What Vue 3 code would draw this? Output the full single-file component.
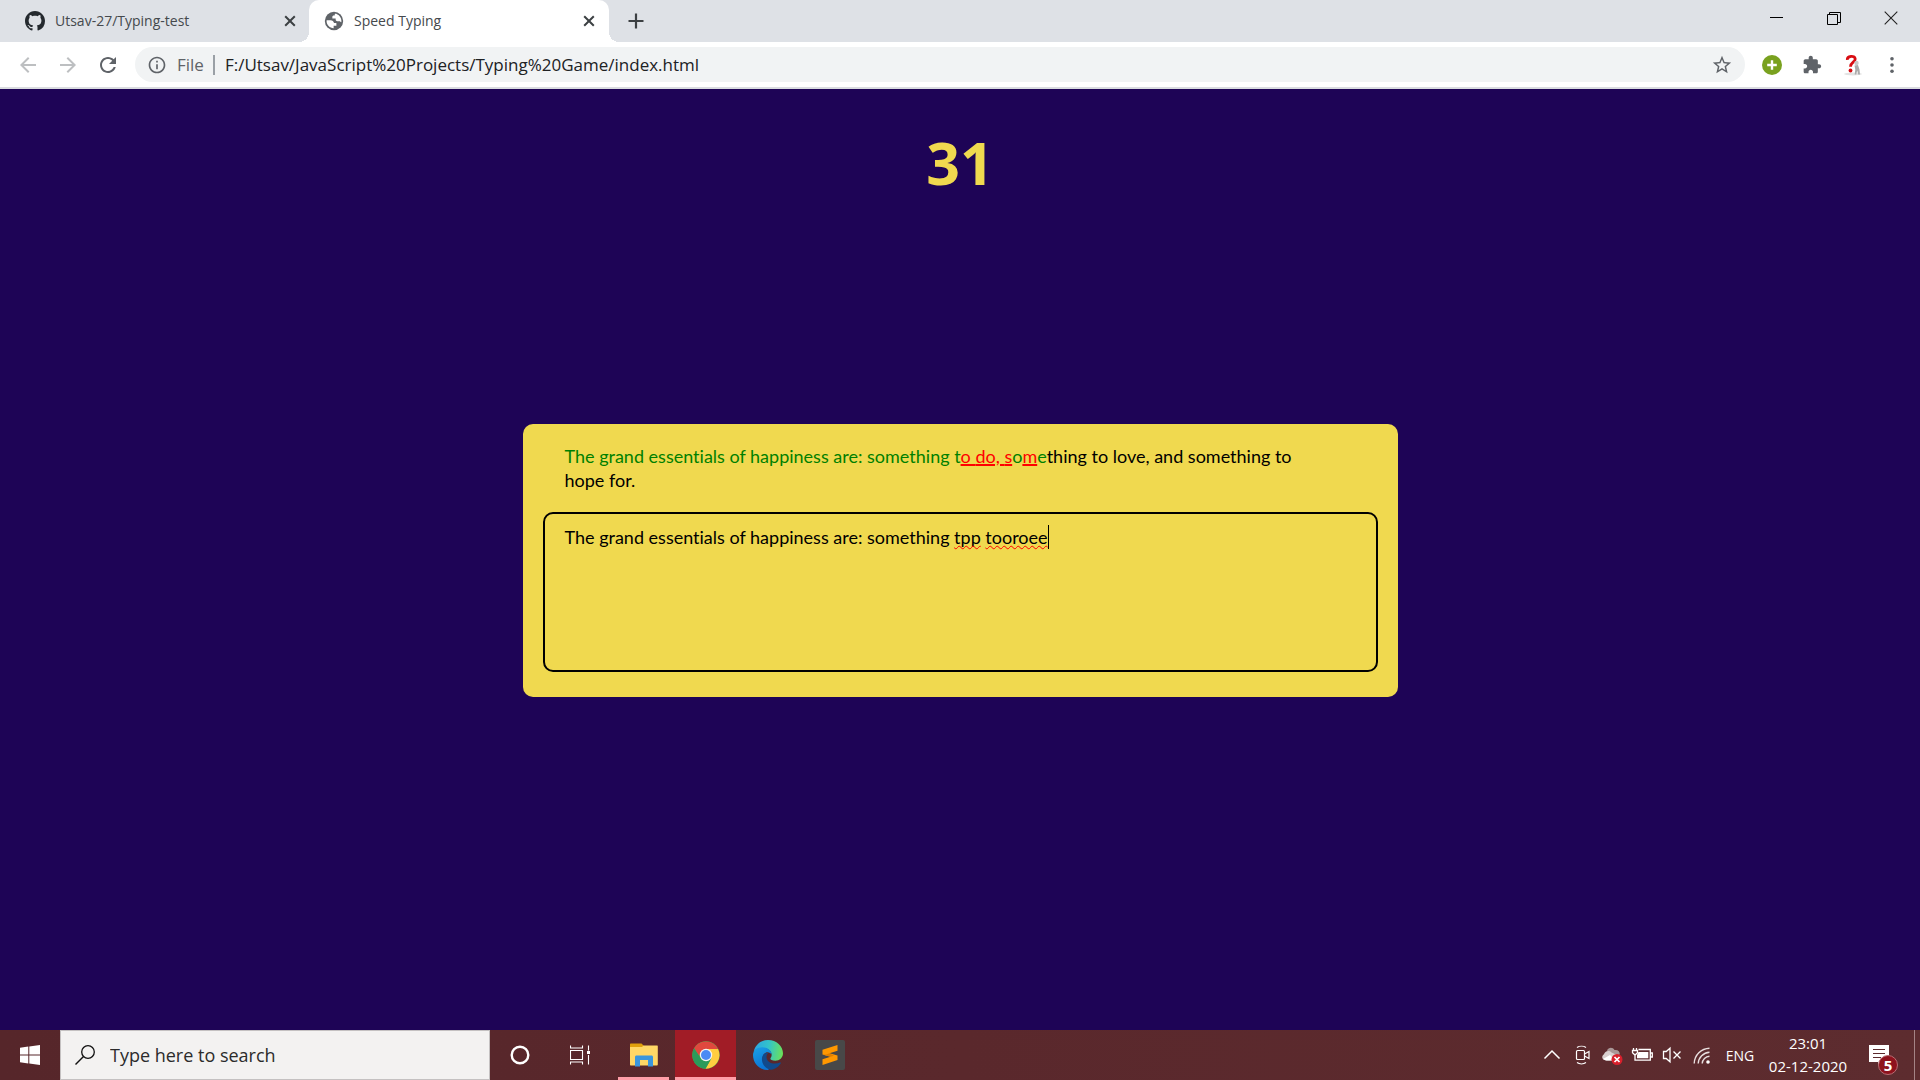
<script setup>
import { ref, computed } from 'vue'

const quote = 'The grand essentials of happiness are: something to do, something to love, and something to hope for.'
const typed = ref('The grand essentials of happiness are: something tpp tooroee')
const timer = ref(31)
const address = ref('F:/Utsav/JavaScript%20Projects/Typing%20Game/index.html')
const misspelled = ['tpp', 'tooroee']

// Characters of one word that share a state are drawn in one span.
const runs = computed(() => {
  const out = []
  quote.split('').forEach((ch, i) => {
    const t = typed.value[i]
    const state = t === undefined ? 'pending' : t === ch ? 'correct' : 'incorrect'
    const last = out[out.length - 1]
    if (last && last.state === state && !last.text.endsWith(' ')) last.text += ch
    else out.push({ state, text: ch })
  })
  return out
})

const typedWords = computed(() => typed.value.split(/( )/))
</script>

<template>
  <div class="desktop">
    <header class="browser">
      <div class="tabs">
        <div class="tab tab-first">
          <svg class="octocat" viewBox="0 0 16 16"><path fill="#24292e" d="M8 0C3.58 0 0 3.58 0 8c0 3.54 2.29 6.53 5.47 7.59.4.07.55-.17.55-.38 0-.19-.01-.82-.01-1.49-2.01.37-2.53-.49-2.69-.94-.09-.23-.48-.94-.82-1.13-.28-.15-.68-.52-.01-.53.63-.01 1.08.58 1.23.82.72 1.21 1.87.87 2.33.66.07-.52.28-.87.51-1.07-1.78-.2-3.64-.89-3.64-3.95 0-.87.31-1.59.82-2.15-.08-.2-.36-1.02.08-2.12 0 0 .67-.21 2.2.82.64-.18 1.32-.27 2-.27s1.36.09 2 .27c1.53-1.04 2.2-.82 2.2-.82.44 1.1.16 1.92.08 2.12.51.56.82 1.27.82 2.15 0 3.07-1.87 3.75-3.65 3.95.29.25.54.73.54 1.48 0 1.07-.01 1.93-.01 2.2 0 .21.15.46.55.38A8.01 8.01 0 0 0 16 8c0-4.42-3.58-8-8-8z"/></svg>
          <span class="tab-title">Utsav-27/Typing-test</span>
          <button class="plain" aria-label="Close tab"><svg class="i20" viewBox="0 0 20 20"><path d="M5.2 5.2l9.6 9.6M14.8 5.2l-9.6 9.6" stroke="#3c4043" stroke-width="2"/></svg></button>
        </div>
        <div class="tab tab-active">
          <svg class="i22" viewBox="0 0 24 24"><circle cx="12" cy="12" r="10" fill="#5f6368"/><path fill="#fff" d="M13 4.2c.8-.1 1.6.1 2.3.4 2.8 1.2 4.8 4 4.8 7.3 0 .6-.1 1-.2 1.5-.6-.2-1-.7-1.3-1.2h-2.9c-1 0-1.9-.8-1.9-1.9v-1h-3.6V7.5c0-.9.6-1.5 1.5-1.5h1z"/><path fill="#fff" d="M4 11.2h4.3c2 0 3.5 1.3 3.7 3h2.6v3h-3v2.7c-4.2 0-7.7-3.6-7.7-7.8z"/></svg>
          <span class="tab-title">Speed Typing</span>
          <button class="plain" aria-label="Close tab"><svg class="i20" viewBox="0 0 20 20"><path d="M5.2 5.2l9.6 9.6M14.8 5.2l-9.6 9.6" stroke="#3c4043" stroke-width="2"/></svg></button>
        </div>
        <button class="plain new-tab" aria-label="New tab"><svg class="i20" viewBox="0 0 20 20"><path d="M10 2.5v15M2.5 10h15" stroke="#3c4043" stroke-width="2.2"/></svg></button>
        <div class="window-controls">
          <button class="plain" aria-label="Minimize"><svg class="i14" viewBox="0 0 14 14"><path d="M0 6.5h13" stroke="#000"/></svg></button>
          <button class="plain" aria-label="Restore"><svg class="i14" viewBox="0 0 14 14"><path d="M.5 3.5h10v10H.5zM2.5 3.5v-2h11v10h-3" fill="none" stroke="#000"/></svg></button>
          <button class="plain" aria-label="Close"><svg class="i14" viewBox="0 0 14 14"><path d="M.7.7l12.6 12.6M13.3.7L.7 13.3" stroke="#222" stroke-width="1.1"/></svg></button>
        </div>
      </div>

      <div class="toolbar">
        <button class="plain tool" aria-label="Back"><svg class="i24" viewBox="0 0 24 24"><path fill="#bdbfc1" d="M20 11H7.83l5.59-5.59L12 4l-8 8 8 8 1.41-1.41L7.83 13H20v-2z"/></svg></button>
        <button class="plain tool" aria-label="Forward"><svg class="i24" viewBox="0 0 24 24"><path fill="#bdbfc1" d="M12 4l-1.41 1.41L16.17 11H4v2h12.17l-5.58 5.59L12 20l8-8z"/></svg></button>
        <button class="plain tool" aria-label="Reload"><svg class="i24" viewBox="0 0 24 24"><path fill="#5f6368" d="M17.65 6.35C16.2 4.9 14.21 4 12 4c-4.42 0-7.99 3.58-7.99 8s3.57 8 7.99 8c3.73 0 6.84-2.55 7.73-6h-2.08c-.82 2.33-3.04 4-5.65 4-3.31 0-6-2.69-6-6s2.69-6 6-6c1.66 0 3.14.69 4.22 1.78L13 11h7V4l-2.35 2.35z"/></svg></button>
        <div class="omnibox">
          <svg class="i20" viewBox="0 0 24 24"><path fill="#5f6368" d="M11 17h2v-6h-2v6zm1-15C6.48 2 2 6.48 2 12s4.48 10 10 10 10-4.48 10-10S17.52 2 12 2zm0 18c-4.41 0-8-3.59-8-8s3.59-8 8-8 8 3.59 8 8-3.59 8-8 8zM11 9h2V7h-2v2z"/></svg>
          <label class="scheme" for="address">File</label>
          <span class="divider"></span>
          <input id="address" v-model="address" class="address" type="text" spellcheck="false" />
          <button class="plain tool" aria-label="Bookmark this page"><svg class="i22" viewBox="0 0 24 24"><path fill="#5f6368" d="M22 9.24l-7.19-.62L12 2 9.19 8.63 2 9.24l5.46 4.73L5.82 21 12 17.27 18.18 21l-1.63-7.03L22 9.24zM12 15.4l-3.76 2.27 1-4.28-3.32-2.88 4.38-.38L12 6.1l1.71 4.04 4.38.38-3.32 2.88 1 4.28L12 15.4z"/></svg></button>
        </div>
        <button class="plain tool" aria-label="Add"><svg class="i20" viewBox="0 0 20 20"><circle cx="10" cy="10" r="10" fill="#79a11f"/><path d="M10 5.2v9.6M5.2 10h9.6" stroke="#fff" stroke-width="2.4"/></svg></button>
        <button class="plain tool" aria-label="Extensions"><svg class="i20" viewBox="0 0 24 24"><path fill="#5f6368" d="M20.5 11H19V7c0-1.1-.9-2-2-2h-4V3.5C13 2.12 11.88 1 10.5 1S8 2.12 8 3.5V5H4c-1.1 0-1.99.9-1.99 2v3.8H3.5c1.49 0 2.7 1.21 2.7 2.7s-1.21 2.7-2.7 2.7H2V20c0 1.1.9 2 2 2h3.8v-1.5c0-1.49 1.21-2.7 2.7-2.7 1.49 0 2.7 1.21 2.7 2.7V22H17c1.1 0 2-.9 2-2v-4h1.5c1.38 0 2.5-1.12 2.5-2.5S21.88 11 20.5 11z"/></svg></button>
        <button class="plain tool" aria-label="Help extension"><svg class="i22" viewBox="0 0 22 22"><ellipse cx="12" cy="20" rx="9" ry="1.5" fill="#e2e2e2"/><path d="M6.3 5.8C6 2 13.8.8 14.200 5c.1 3.300-4.700 3.200-4.700 7.800" fill="none" stroke="#d80d12" stroke-width="2.8"/><circle cx="9.500" cy="16.500" r="1.900" fill="#d80d12"/><circle cx="15.500" cy="9" r="2.200" fill="#c9c9c9"/><path d="M13.500 11.500l3.500-.5 1.500 4.500.5 5h-1.800l-1-4-1 4h-1.500l.6-5z" fill="#ababab"/></svg></button>
        <button class="plain tool" aria-label="Menu"><svg class="i20" viewBox="0 0 20 20"><g fill="#5f6368"><circle cx="10" cy="3.7" r="1.8"/><circle cx="10" cy="10" r="1.8"/><circle cx="10" cy="16.3" r="1.8"/></g></svg></button>
      </div>
    </header>

    <main class="page">
      <div class="timer">{{ timer }}</div>
      <section class="card">
        <p class="quote"><span v-for="(run, i) in runs" :key="i" :class="run.state">{{ run.text }}</span></p>
        <div class="entry">
          <textarea v-model="typed" class="field" aria-label="Type the quote" spellcheck="false"></textarea>
          <div class="marks" aria-hidden="true"><span v-for="(word, i) in typedWords" :key="i" :class="{ misspelled: misspelled.includes(word) }">{{ word }}</span><span class="caret"></span></div>
        </div>
      </section>
    </main>

    <footer class="taskbar">
      <button class="plain slot" aria-label="Start"><svg class="i20" viewBox="0 0 20 20"><path fill="#fff" d="M0 2.7L8.3 1.5V9.4H0zM9.3 1.4L20 0V9.4H9.3zM0 10.4h8.3v8L0 17.2zM9.3 10.4H20V20L9.3 18.5z"/></svg></button>
      <div class="search">
        <svg class="i20" viewBox="0 0 20 20"><circle cx="13" cy="7" r="6.3" fill="none" stroke="#111" stroke-width="1.3"/><path d="M8.5 11.5L.5 19.5" stroke="#111" stroke-width="1.4"/></svg>
        <input class="search-input" type="text" aria-label="Search" placeholder="Type here to search" />
      </div>
      <button class="plain slot" aria-label="Cortana"><svg class="i20" viewBox="0 0 20 20"><circle cx="10" cy="10" r="8.3" fill="none" stroke="#fff" stroke-width="2.4"/></svg></button>
      <button class="plain slot" aria-label="Task view"><svg class="i20" viewBox="0 0 20 20"><g fill="none" stroke="#fff" stroke-width="1.1"><path d="M.5 5.5h12v9H.5zM.5.5v2.5h12V.5M.5 19.5V17h12v2.5M18.5.5v5M18.5 10v9.5"/></g><path fill="#fff" d="M17 6h3v3h-3z"/></svg></button>
      <div class="apps">
        <button class="plain app running" aria-label="File Explorer"><svg class="i30" viewBox="0 0 30 30"><path fill="#e0a00c" d="M1 4.5c0-.6.4-1 1-1h10.5l2 2V8H1z"/><path fill="#ffd766" d="M1 7h12l1.5-1.5H28c.6 0 .8.4.8.8v18.2c0 .6-.3 1-.8 1H2c-.6 0-1-.4-1-1z"/><path fill="#3a96dd" d="M6 26.5V17c0-.8.6-1.5 1.5-1.5h15c.9 0 1.5.7 1.5 1.5v9.5h-5V20h-8v6.5z"/></svg></button>
        <button class="plain app current" aria-label="Chrome"><svg class="i30" viewBox="0 0 30 30"><circle cx="15" cy="15" r="13.7" fill="#4caf50"/><path fill="#e0483e" d="M3.1 8.2A13.7 13.7 0 0 1 27 8.9H15l-5.5 3.7L8 16z"/><path fill="#ffcd40" d="M15 8.9h12A13.7 13.7 0 0 1 14.5 28.7l5.8-10.2z"/><path fill="#2b9a5a" d="M3.1 8.2A13.7 13.7 0 0 0 14.5 28.7L20 19l-10.5-1z"/><circle cx="15" cy="15" r="6.2" fill="#f4f4f4"/><circle cx="15" cy="15" r="5" fill="#4a8af4"/></svg></button>
        <button class="plain app" aria-label="Edge"><svg class="i30" viewBox="0 0 30 30">
          <defs>
            <linearGradient id="edge-top" x1="0" y1=".4" x2="1" y2=".5"><stop offset="0" stop-color="#2ba5e4"/><stop offset=".5" stop-color="#33c3c9"/><stop offset="1" stop-color="#6be159"/></linearGradient>
            <linearGradient id="edge-left" x1="0" y1="0" x2=".4" y2="1"><stop offset="0" stop-color="#1ba0e6"/><stop offset="1" stop-color="#0a74d4"/></linearGradient>
          </defs>
          <path fill="url(#edge-top)" d="M.6 12C2 5 7.8 0 15 0c8.6 0 15 6.2 15 13.3 0 4.6-3.5 7.4-7.6 7.4-3.3 0-5-1.2-5-2 0-.9 1.3-1.5 1.3-3.9C18.7 10.5 14 8 10 8 5 8 1.8 10 .6 12z"/>
          <path fill="url(#edge-left)" d="M0 15c.1-5 4.5-7.7 9.3-7.7 5.3 0 9.4 3.4 9.4 7.5-1.3-2.6-5.3-3.7-7.7-.8-2.5 3.1-1.3 9 3.4 11.7 1.8 1.1 1.5 3.3 1 4.3C6.5 30.3 0 23.6 0 15z"/>
          <path fill="#114a8b" d="M10.8 14.3c-4 4-1.6 13.8 7.2 15.4 4.4-.5 8-3.2 9.8-6.5.3-.7-.2-1-.8-.7-6.2 2.9-13.7-.2-13.5-5.8.1-1.4.6-2.7 1.7-3.7-1.6-.3-3.1.1-4.4 1.3z"/>
        </svg></button>
        <button class="plain app" aria-label="Sublime Text"><svg class="i30" viewBox="0 0 30 30"><rect width="30" height="30" rx="2" fill="#484848"/><path fill="#ff9800" d="M22.5 5v5.8l-8 2.5 8 2.3V20L7.5 25v-5.800l8-2.400-8-2.300V9.800z"/><path fill="#e07f00" d="M7.5 14.5l8 2.3 3.5-1-4.500-2.500-3.500 1.200z"/></svg></button>
      </div>

      <div class="tray">
        <button class="plain tray-slot" aria-label="Show hidden icons"><svg class="i20" viewBox="0 0 20 20"><path d="M2.5 13.5L10 6l7.5 7.5" fill="none" stroke="#fff" stroke-width="1.5"/></svg></button>
        <button class="plain tray-slot" aria-label="Meet now"><svg class="i20" viewBox="0 0 20 20"><g fill="none" stroke="#fff" stroke-width="1.2"><rect x="4.5" y="5.5" width="8" height="9" rx="1"/><path d="M12.5 9l4.5-2.5v7L12.5 11M5 2.5c2.5-1.7 6.5-1.7 9 0M5 17.5c2.5 1.7 6.5 1.7 9 0"/></g></svg></button>
        <button class="plain tray-slot" aria-label="OneDrive"><svg class="i22" viewBox="0 0 22 22"><path fill="#a99797" d="M6 6.5C7.5 2.800 12 3 13.500 6c3.400-.6 5.500 1.600 5.300 4.500L12 13z"/><path fill="#d9cfcf" d="M6 16.500c-5.300 0-6-4.500-3-6.300C3.700 7 8 5.700 10.500 8.500L18 12v4.500z"/><path fill="#fff" d="M2 15l7-4 5 5.500H5z"/><circle cx="16" cy="15.5" r="5.5" fill="#d9202c"/><path d="M13.5 13l5 5M18.5 13l-5 5" stroke="#fff" stroke-width="1.7"/></svg></button>
        <button class="plain tray-slot" aria-label="Battery"><svg class="i22" viewBox="0 0 22 22"><g fill="none" stroke="#fff" stroke-width="1.3"><path d="M7.5 5.5h11.8v10.7H4V11M19.5 9h1.8v4h-1.8M1.5 6.5h5v2.2L4 11 1.5 8.7zM2.5 6.5V4M5.5 6.5V4"/></g><path fill="#fff" d="M7.5 8h9.8v6.3H6V11z"/></svg></button>
        <button class="plain tray-slot" aria-label="Volume muted"><svg class="i20" viewBox="0 0 20 20"><g fill="none" stroke="#fff" stroke-width="1.3"><path d="M1.5 6.5h2.7L8 3.2v13.6l-3.8-3.3H1.5zM11.5 6.5l7 7M18.5 6.5l-7 7"/></g></svg></button>
        <button class="plain tray-slot" aria-label="Wi-Fi"><svg class="i20" viewBox="0 0 20 20"><g fill="none" stroke="#e9dfdf" stroke-width="1.4"><path d="M2.2 18.5A15.8 15.8 0 0 1 17.5 3.2M6.2 18.5A11.8 11.8 0 0 1 17.5 7.2M10.2 18.5a7.8 7.8 0 0 1 7.3-7.3"/></g><circle cx="16" cy="17" r="1.8" fill="#fff"/></svg></button>
        <button class="plain lang">ENG</button>
        <button class="plain clock"><time>23:01</time><time>02-12-2020</time></button>
        <button class="plain notices" aria-label="Notifications">
          <svg class="i20" viewBox="0 0 20 20"><path fill="#fff" d="M0 0h20v17H13l-4 3v-3H0z"/><path d="M4 4.5h12M4 8.5h12M4 12.5h8" stroke="#5c2b2e" stroke-width="1.2"/></svg>
          <span class="badge">5</span>
        </button>
        <span class="peek"></span>
      </div>
    </footer>
  </div>
</template>

<style>
body { margin: 0; }
</style>

<style scoped>
.desktop {
  display: flex;
  flex-direction: column;
  min-height: 100vh;
  overflow: hidden;
  font-family: "Open Sans", "Noto Sans", sans-serif;
}
.desktop * { box-sizing: border-box; }
svg { display: block; flex: none; }
.i14 { width: 14px; height: 14px; }
.i20, .octocat { width: 20px; height: 20px; }
.i22 { width: 22px; height: 22px; }
.i24 { width: 24px; height: 24px; }
.i30 { width: 30px; height: 30px; }
.plain {
  display: flex;
  align-items: center;
  justify-content: center;
  flex: none;
  padding: 0;
  border: 0;
  background: none;
  color: inherit;
  font: inherit;
}
input, textarea {
  border: 0;
  outline: 0;
  background: none;
  font: inherit;
  color: inherit;
}

/* Browser window */
.tabs {
  display: flex;
  height: 42px;
  background: #dee1e6;
}
.tab {
  display: flex;
  align-items: center;
  position: relative;
  font-size: 14px;
  color: #45494d;
}
.tab-title { flex: 1; padding-bottom: 2px; white-space: nowrap; }
.tab-first { width: 309px; padding: 0 9px 0 25px; gap: 10px; }
.tab-active {
  width: 300px;
  padding: 0 10px 0 14px;
  gap: 9px;
  background: #fff;
  border-radius: 10px 10px 0 0;
}
.tab-active::before, .tab-active::after {
  content: "";
  position: absolute;
  bottom: 0;
  width: 10px;
  height: 10px;
}
.tab-active::before {
  right: 100%;
  background: radial-gradient(circle at 0 0, transparent 10px, #fff 10px);
}
.tab-active::after {
  left: 100%;
  background: radial-gradient(circle at 100% 0, transparent 10px, #fff 10px);
}
.new-tab { width: 40px; margin-left: 7px; }
.window-controls { display: flex; height: 36px; margin: 0 1px 0 auto; }
.window-controls .plain { width: 57px; }
.toolbar {
  display: flex;
  align-items: center;
  height: 47px;
  padding: 0 8px;
  background: #fff;
  border-bottom: 2px solid #dadce0;
}
.tool { width: 40px; height: 34px; }
.omnibox {
  display: flex;
  align-items: center;
  flex: 1;
  height: 35px;
  margin: 0 7px;
  padding: 0 3px 0 12px;
  border-radius: 18px;
  background: #f1f3f4;
  font-size: 17px;
  color: #202124;
}
.scheme { margin-left: 10px; color: #5f6368; }
.divider { width: 2px; height: 20px; margin: 0 10px 0 9px; background: #9aa0a6; }
.address { flex: 1; min-width: 0; padding: 0; }

/* Typing page */
.page {
  flex: 1;
  display: grid;
  grid-template-rows: 1fr auto 1fr;
  justify-items: center;
  padding-top: 2px;
  background: #1e0456;
}
.timer {
  padding-top: 31px;
  font-size: 59px;
  line-height: 80px;
  font-weight: 700;
  color: #f0d94f;
}
.card {
  width: 875px;
  max-width: 90%;
  padding: 20px 20px 25px;
  border-radius: 10px;
  background: #f0d94f;
  font-family: Lato, "Open Sans", sans-serif;
  font-size: 18px;
  font-variant-ligatures: none;
  line-height: 24px;
  color: #000;
}
.quote { margin: 0 60px 20px 22px; }
.correct { color: #008000; }
.incorrect { color: #f00; text-decoration: underline; text-decoration-thickness: 2px; }
.entry { position: relative; height: 160px; }
.field, .marks {
  width: 100%;
  height: 100%;
  padding: 11px 20px;
  border: 2px solid #000;
  border-radius: 10px;
}
.field { display: block; resize: none; }
.marks {
  position: absolute;
  inset: 0;
  border-color: transparent;
  color: transparent;
  pointer-events: none;
  white-space: pre-wrap;
}
.misspelled { text-decoration: underline wavy #f00 1px; text-underline-offset: 1px; text-decoration-skip-ink: none; }
.caret { display: inline-block; width: 1px; height: 24px; vertical-align: top; background: #000; }

/* Taskbar */
.taskbar {
  display: flex;
  height: 50px;
  background: linear-gradient(90deg, #56262a, #5a282c 50%, #5d2c2f);
  color: #fff;
}
.slot { width: 60px; }
.search {
  display: flex;
  align-items: center;
  width: 430px;
  padding-left: 14px;
  gap: 15px;
  border: 1px solid #c4c1c1;
  background: #f3f2f1;
}
.search-input { flex: 1; min-width: 0; padding: 0; font-size: 18px; color: #222; }
.search-input::placeholder { color: #2b2b2b; opacity: 1; }
.apps { display: flex; gap: 1px; margin-left: 3px; }
.app { width: 61px; position: relative; }
.running::after, .current::after {
  content: "";
  position: absolute;
  bottom: 0;
  left: 5px;
  right: 5px;
  height: 3px;
  background: #ff9ea8;
}
.current { background: #a11c26; }
.current::after { left: 0; right: 0; }
.tray { display: flex; margin-left: auto; font-size: 15px; }
.tray-slot { width: 30px; }
.lang { width: 46px; font-size: 14px; }
.clock { width: 90px; flex-direction: column; line-height: 23px; }
.notices { position: relative; width: 52px; }
.badge {
  position: absolute;
  top: 25px;
  left: 25px;
  width: 20px;
  height: 20px;
  border: 1px solid #b96c72;
  border-radius: 50%;
  background: #8e121d;
  font-size: 15px;
  line-height: 18px;
  font-weight: 700;
  text-align: center;
}
.peek { width: 6px; margin-left: 9px; border-left: 1px solid #a48385; }
</style>
